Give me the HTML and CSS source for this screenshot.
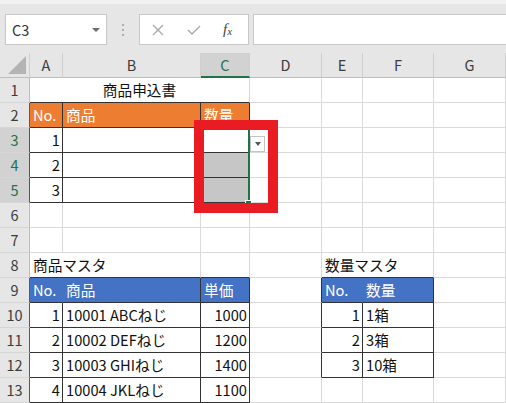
FILE: index.html
```html
<!DOCTYPE html>
<html lang="ja">
<head>
<meta charset="utf-8">
<title>商品申込書</title>
<link rel="stylesheet" href="styles.css">
</head>
<body>
<div class="app">
  <div class="toolbar">
    <div class="namebox"><span>C3</span><span class="nb-arrow"></span></div>
    <div class="sep">
      <svg width="4" height="14" viewBox="0 0 4 14"><circle cx="2" cy="2" r="1" fill="#9a9a9a"/><circle cx="2" cy="7" r="1" fill="#9a9a9a"/><circle cx="2" cy="12" r="1" fill="#9a9a9a"/></svg>
    </div>
    <div class="fbtns">
      <svg class="ico-x" width="12" height="12" viewBox="0 0 12 12"><path d="M1 1L11 11M11 1L1 11" stroke="#a9a9a9" stroke-width="1.3" fill="none"/></svg>
      <svg class="ico-ok" width="14" height="10" viewBox="0 0 14 10"><path d="M1 5L5 9L13 1" stroke="#a9a9a9" stroke-width="1.4" fill="none"/></svg>
      <span class="fx"><i>f</i><span class="fxx">x</span></span>
    </div>
    <div class="finput"></div>
  </div>

  <div class="sheet">
    <div class="corner"><svg width="18" height="18" viewBox="0 0 18 18"><path d="M18 0V18H0Z" fill="#b4b4b4"/></svg></div>
    <div class="ch">A</div>
    <div class="ch">B</div>
    <div class="ch sel">C</div>
    <div class="ch">D</div>
    <div class="ch">E</div>
    <div class="ch">F</div>
    <div class="ch">G</div>

    <div class="rh">1</div>
    <div class="c span3 ctr B">商品申込書</div>
    <div class="c"></div><div class="c"></div><div class="c"></div><div class="c"></div>

    <div class="rh dk">2</div>
    <div class="c org R B">No.</div>
    <div class="c org R B">商品</div>
    <div class="c org R B">数量</div>
    <div class="c"></div><div class="c"></div><div class="c"></div><div class="c"></div>

    <div class="rh sel">3</div>
    <div class="c num R B">1</div>
    <div class="c R B"></div>
    <div class="c R B"></div>
    <div class="c"></div><div class="c"></div><div class="c"></div><div class="c"></div>

    <div class="rh sel">4</div>
    <div class="c num R B">2</div>
    <div class="c R B"></div>
    <div class="c gry R B"></div>
    <div class="c"></div><div class="c"></div><div class="c"></div><div class="c"></div>

    <div class="rh sel">5</div>
    <div class="c num R B">3</div>
    <div class="c R B"></div>
    <div class="c gry R B"></div>
    <div class="c"></div><div class="c"></div><div class="c"></div><div class="c"></div>

    <div class="rh">6</div>
    <div class="c"></div><div class="c"></div><div class="c"></div><div class="c"></div><div class="c"></div><div class="c"></div><div class="c"></div>

    <div class="rh">7</div>
    <div class="c"></div><div class="c"></div><div class="c"></div><div class="c"></div><div class="c"></div><div class="c"></div><div class="c"></div>

    <div class="rh">8</div>
    <div class="c span2 B">商品マスタ</div>
    <div class="c B"></div>
    <div class="c"></div>
    <div class="c span2 B">数量マスタ</div>
    <div class="c"></div>

    <div class="rh dk">9</div>
    <div class="c blu noR B">No.</div>
    <div class="c blu R B">商品</div>
    <div class="c blu R B">単価</div>
    <div class="c R"></div>
    <div class="c blu noR B">No.</div>
    <div class="c blu R B">数量</div>
    <div class="c"></div>

    <div class="rh dk">10</div>
    <div class="c num R B">1</div>
    <div class="c R B">10001 ABCねじ</div>
    <div class="c num R B">1000</div>
    <div class="c R"></div>
    <div class="c num R B">1</div>
    <div class="c R B">1箱</div>
    <div class="c"></div>

    <div class="rh dk">11</div>
    <div class="c num R B">2</div>
    <div class="c R B">10002 DEFねじ</div>
    <div class="c num R B">1200</div>
    <div class="c R"></div>
    <div class="c num R B">2</div>
    <div class="c R B">3箱</div>
    <div class="c"></div>

    <div class="rh dk">12</div>
    <div class="c num R B">3</div>
    <div class="c R B">10003 GHIねじ</div>
    <div class="c num R B">1400</div>
    <div class="c R"></div>
    <div class="c num R B">3</div>
    <div class="c R B">10箱</div>
    <div class="c"></div>

    <div class="rh dk">13</div>
    <div class="c num R B">4</div>
    <div class="c R B">10004 JKLねじ</div>
    <div class="c num R B">1100</div>
    <div class="c"></div><div class="c"></div><div class="c"></div><div class="c"></div>

    <div class="selection"><span class="handle"></span></div>
    <div class="dropbtn"><span class="db-arrow"></span></div>
    <div class="highlight"></div>
  </div>
</div>
</body>
</html>
```
FILE: styles.css
```css
html, body {
  margin: 0;
  padding: 0;
  background: #ffffff;
}
body {
  width: 506px;
  height: 403px;
  overflow: hidden;
  font-family: "Noto Sans CJK JP", "Noto Sans", sans-serif;
}
.app {
  width: 506px;
  height: 403px;
  overflow: hidden;
}

/* formula bar */
.toolbar {
  height: 53px;
  box-sizing: border-box;
  background: #e6e6e6;
  border-top: 4px solid #f3f1f1;
  display: flex;
  align-items: flex-start;
  padding: 10px 0 0 5px;
}
.namebox {
  width: 102px;
  height: 31px;
  box-sizing: border-box;
  background: #ffffff;
  border: 1px solid #c8c8c8;
  display: flex;
  align-items: center;
  padding: 0 6px 0 6px;
  font-size: 14.5px;
  color: #333333;
}
.nb-arrow {
  margin-left: auto;
  width: 0;
  height: 0;
  border-left: 4px solid transparent;
  border-right: 4px solid transparent;
  border-top: 4px solid #6a6a6a;
}
.sep {
  width: 32px;
  height: 31px;
  display: flex;
  align-items: center;
  justify-content: center;
}
.fbtns {
  width: 110px;
  height: 31px;
  box-sizing: border-box;
  background: #ffffff;
  border: 1px solid #c8c8c8;
  display: flex;
  align-items: center;
  padding-left: 12px;
}
.ico-x { margin-right: 23px; }
.ico-ok { margin-right: 22px; }
.fx {
  font-family: "Liberation Serif", serif;
  font-size: 15px;
  color: #444444;
  line-height: 1;
}
.fxx {
  font-style: italic;
  font-size: 11px;
  position: relative;
  top: 1px;
}
.finput {
  margin-left: 4px;
  flex: 1;
  height: 31px;
  box-sizing: border-box;
  background: #ffffff;
  border: 1px solid #c8c8c8;
  border-right: none;
}

/* sheet grid */
.sheet {
  position: relative;
  display: grid;
  grid-template-columns: 30px 33px 138px 49px 72px 41px 71px 72px;
  grid-auto-rows: 25px;
}
.corner, .ch, .rh, .c {
  box-sizing: border-box;
  white-space: nowrap;
  overflow: hidden;
}
.corner {
  background: #e6e6e6;
  border-right: 1px solid #cfcfcf;
  border-bottom: 1px solid #bdbdbd;
  display: flex;
  align-items: flex-end;
  justify-content: flex-end;
  padding: 0 3px 3px 0;
}
.ch {
  background: #e6e6e6;
  border-right: 1px solid #cfcfcf;
  border-bottom: 1px solid #bdbdbd;
  text-align: center;
  font-size: 14.5px;
  line-height: 24px;
  color: #3c3c3c;
}
.ch.sel {
  background: #d2d2d2;
  color: #217346;
  border-bottom: 2px solid #217346;
  line-height: 23px;
}
.rh {
  background: #e6e6e6;
  border-right: 1px solid #bdbdbd;
  border-bottom: 1px solid #d6d6d6;
  text-align: center;
  font-size: 14.5px;
  line-height: 24px;
  color: #3c3c3c;
}
.rh.dk { border-right-color: #5a5a5a; }
.rh.sel {
  background: #d2d2d2;
  color: #217346;
  border-right-color: #217346;
}
.c {
  background: #ffffff;
  border-right: 1px solid #dadada;
  border-bottom: 1px solid #dadada;
  font-size: 14.67px;
  line-height: 24px;
  padding: 0 3px;
  color: #111111;
}
.span2 { grid-column: span 2; }
.span3 { grid-column: span 3; }
.ctr { text-align: center; }
.num { text-align: right; padding-right: 2px; }
.R { border-right-color: #333333; }
.B { border-bottom-color: #333333; }
.org { background: #ed7d31; color: #ffffff; }
.blu { background: #4472c4; color: #ffffff; }
.blu.noR { border-right-color: #4472c4; }
.gry { background: #c6c6c6; }

/* overlays */
.selection {
  position: absolute;
  left: 199px;
  top: 75px;
  width: 51px;
  height: 77px;
  box-sizing: border-box;
  border: 2px solid #217346;
  pointer-events: none;
}
.handle {
  position: absolute;
  right: -4px;
  bottom: -4px;
  width: 5px;
  height: 5px;
  background: #217346;
  border: 1px solid #ffffff;
}
.dropbtn {
  position: absolute;
  left: 250px;
  top: 83px;
  width: 15px;
  height: 16px;
  box-sizing: border-box;
  background: #ffffff;
  border: 1px solid #c4c4c4;
  display: flex;
  align-items: center;
  justify-content: center;
}
.db-arrow {
  width: 0;
  height: 0;
  border-left: 3.5px solid transparent;
  border-right: 3.5px solid transparent;
  border-top: 4px solid #555555;
}
.highlight {
  position: absolute;
  left: 194px;
  top: 67px;
  width: 84px;
  height: 93px;
  box-sizing: border-box;
  border: 10px solid #e91c24;
}
```
